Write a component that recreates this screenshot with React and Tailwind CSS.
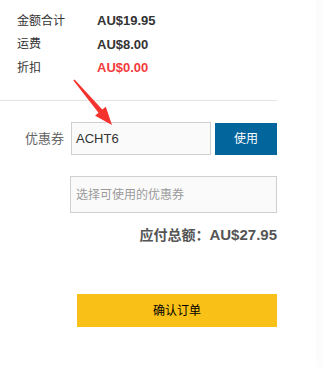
export default function App() {
  const font = { fontFamily: '"Liberation Sans", "Noto Sans CJK SC", sans-serif' };
  const rows = [
    { label: '金额合计', value: 'AU$19.95', red: false },
    { label: '运费', value: 'AU$8.00', red: false },
    { label: '折扣', value: 'AU$0.00', red: true },
  ];

  return (
    <div className="relative w-[323px] h-[367px] bg-white overflow-hidden" style={font}>
      <div className="w-[277px]">
        {/* Price summary */}
        <div className="pt-[9px] pl-[17px] h-[100px]">
          {rows.map(r => (
            <div key={r.label} className="flex items-center h-[23.5px]">
              <span className="w-[80px] text-[12px] text-[#333]">{r.label}</span>
              <span className={`text-[13px] font-bold ${r.red ? 'text-[#f23b3b]' : 'text-[#333]'}`}>{r.value}</span>
            </div>
          ))}
        </div>
        <div className="h-px bg-[#e3e3e3]" />

        {/* Coupon */}
        <div className="flex items-center mt-[21px]">
          <span className="w-[65px] text-right text-[13px] text-[#666] pr-[1px]">优惠券</span>
          <div className="ml-[6px] w-[140px] h-[33px] border border-[#cfcfcf] bg-[#fafafa] flex items-center pl-[4px] text-[13px] text-[#333]">
            ACHT6
          </div>
          <button className="ml-[4px] w-[62px] h-[32px] bg-[#02659c] text-white text-[12px]">使用</button>
        </div>

        <div className="ml-[70px] mt-[21px] h-[37px] border border-[#cfcfcf] bg-[#fafafa] flex items-center pl-[5px] text-[12px] text-[#9a9a9a]">
          选择可使用的优惠券
        </div>

        <div className="mt-[13px] text-right leading-[18px] font-bold text-[#555]">
          <span className="text-[14px]">应付总额：</span>
          <span className="text-[15px]">AU$27.95</span>
        </div>

        <button className="ml-[77px] mt-[50px] w-[200px] h-[33px] bg-[#f9c017] text-[12px] text-black">确认订单</button>
      </div>

      <div className="absolute right-0 top-0 w-[7px] h-full bg-[#fcfcfc]" />

      {/* Annotation arrow */}
      <svg className="absolute left-0 top-0 pointer-events-none" width="323" height="367">
        <polygon
          points="73.4,80.4 98.5,112.8 95.1,115.7 112,125 105.8,106.7 102.3,109.6 74.6,79.6"
          fill="#f4332f"
        />
      </svg>
    </div>
  );
}
